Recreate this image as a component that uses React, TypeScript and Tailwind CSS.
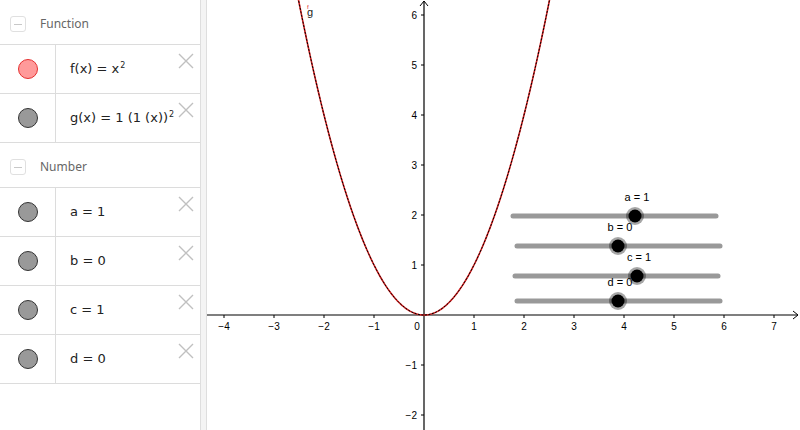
import React from 'react';

type Row = { id: string; color: 'red' | 'gray'; label: React.ReactNode };

const sup = (s: string) => <sup className="relative -top-[3px] text-[8px] align-super leading-none ml-[1px]">{s}</sup>;

const functions: Row[] = [
  { id: 'f', color: 'red', label: <>f(x) = x{sup('2')}</> },
  { id: 'g', color: 'gray', label: <>g(x) = 1 (1 (x)){sup('2')}</> },
];

const numbers: Row[] = [
  { id: 'a', color: 'gray', label: 'a = 1' },
  { id: 'b', color: 'gray', label: 'b = 0' },
  { id: 'c', color: 'gray', label: 'c = 1' },
  { id: 'd', color: 'gray', label: 'd = 0' },
];

const GroupHeader: React.FC<{ title: string }> = ({ title }) => (
  <div className="flex items-center h-[45px] pl-[10px] pt-[4px] border-b border-[#dcdcdc]">
    <div className="w-[16px] h-[16px] rounded-[3px] border border-[#e0e0e0] flex items-center justify-center">
      <div className="w-[8px] h-[1px] bg-[#c8c8c8]" />
    </div>
    <span className="ml-[14px] text-[12px] text-[#666]">{title}</span>
  </div>
);

const ItemRow: React.FC<{ row: Row }> = ({ row }) => (
  <div className="relative flex h-[49px] border-b border-[#dcdcdc]">
    <div className="w-[56px] flex items-center justify-center border-r border-[#dcdcdc]">
      <div
        className={
          row.color === 'red'
            ? 'w-[20px] h-[20px] rounded-full bg-[#ff9a9a] border border-[#e53030]'
            : 'w-[20px] h-[20px] rounded-full bg-[#999] border border-[#333]'
        }
      />
    </div>
    <div className="flex items-center pl-[14px] text-[13px] text-[#222] font-['DejaVu_Sans',sans-serif]">
      {row.label}
    </div>
    <svg className="absolute right-[6px] top-[8px]" width="16" height="16" viewBox="0 0 16 16">
      <path d="M1 1 L15 15 M15 1 L1 15" stroke="#c0c0c0" strokeWidth="1.4" fill="none" />
    </svg>
  </div>
);

const OX = 424;
const OY = 315;
const U = 50;

const parabola = () => {
  const pts: string[] = [];
  for (let x = -2.56; x <= 2.56; x += 0.02) {
    pts.push(`${(OX + x * U).toFixed(2)},${(OY - x * x * U).toFixed(2)}`);
  }
  return 'M' + pts.join(' L');
};

const sliders = [
  { name: 'a = 1', y: 216, x1: 513, x2: 716, k: 635 },
  { name: 'b = 0', y: 246, x1: 517, x2: 720, k: 618 },
  { name: 'c = 1', y: 276, x1: 515, x2: 718, k: 637 },
  { name: 'd = 0', y: 301, x1: 517, x2: 720, k: 618 },
];

const Graph: React.FC = () => {
  const d = parabola();
  const xs = [-4, -3, -2, -1, 1, 2, 3, 4, 5, 6, 7];
  const ys = [-2, -1, 1, 2, 3, 4, 5, 6];
  const fmt = (n: number) => (n < 0 ? '\u2212' + Math.abs(n) : String(n));
  return (
    <svg className="block" width="593" height="430" viewBox="207 0 593 430" fontFamily="'Liberation Sans', Arial, sans-serif">
      {/* axes */}
      <line x1="207" y1={OY} x2="798" y2={OY} stroke="#000" strokeWidth="1.2" />
      <path d="M793 311 L798 315 L793 319" stroke="#000" fill="none" />
      <line x1={OX} y1="430" x2={OX} y2="1" stroke="#000" strokeWidth="1.2" />
      <path d="M420 6 L424 1 L428 6" stroke="#000" fill="none" />
      {xs.map((n) => (
        <g key={'x' + n}>
          <line x1={OX + n * U} y1={OY} x2={OX + n * U} y2={OY + 3} stroke="#000" />
          <text x={OX + n * U} y={OY + 15} fontSize="10" textAnchor="middle" fill="#000">
            {fmt(n)}
          </text>
        </g>
      ))}
      <text x={OX - 7} y={OY + 15} fontSize="10" textAnchor="middle" fill="#000">0</text>
      {ys.map((n) => (
        <g key={'y' + n}>
          <line x1={OX - 3} y1={OY - n * U} x2={OX} y2={OY - n * U} stroke="#000" />
          <text x={OX - 7} y={OY - n * U + 4} fontSize="10" textAnchor="end" fill="#000">
            {fmt(n)}
          </text>
        </g>
      ))}
      {/* curves f and g overlapping */}
      <path d={d} stroke="#d42020" strokeWidth="1.6" fill="none" />
      <path d={d} stroke="#000" strokeWidth="1" strokeDasharray="2 1.5" fill="none" />
      <text x="307" y="9" fontSize="6" fill="#e02020">f</text>
      <text x="307" y="16" fontSize="11" fill="#222">g</text>
      {/* sliders */}
      {sliders.map((s) => (
        <g key={s.name}>
          <line x1={s.x1} y1={s.y} x2={s.x2} y2={s.y} stroke="#999" strokeWidth="5" strokeLinecap="round" />
          <circle cx={s.k} cy={s.y} r="9" fill="#000" fillOpacity="0.35" />
          <circle cx={s.k} cy={s.y} r="6.5" fill="#000" />
          <text x={s.k + 2} y={s.y - 15} fontSize="11" textAnchor="middle" fill="#000">
            {s.name}
          </text>
        </g>
      ))}
    </svg>
  );
};

export default function App() {
  return (
    <div className="flex w-[800px] h-[430px] bg-white overflow-hidden font-['Noto_Sans',sans-serif]">
      <div className="w-[200px] shrink-0 flex flex-col">
        <GroupHeader title="Function" />
        {functions.map((r) => (
          <ItemRow key={r.id} row={r} />
        ))}
        <GroupHeader title="Number" />
        {numbers.map((r) => (
          <ItemRow key={r.id} row={r} />
        ))}
      </div>
      <div className="w-[7px] shrink-0 bg-[#f4f4f4] border-x border-[#dedede]" />
      <Graph />
    </div>
  );
}
